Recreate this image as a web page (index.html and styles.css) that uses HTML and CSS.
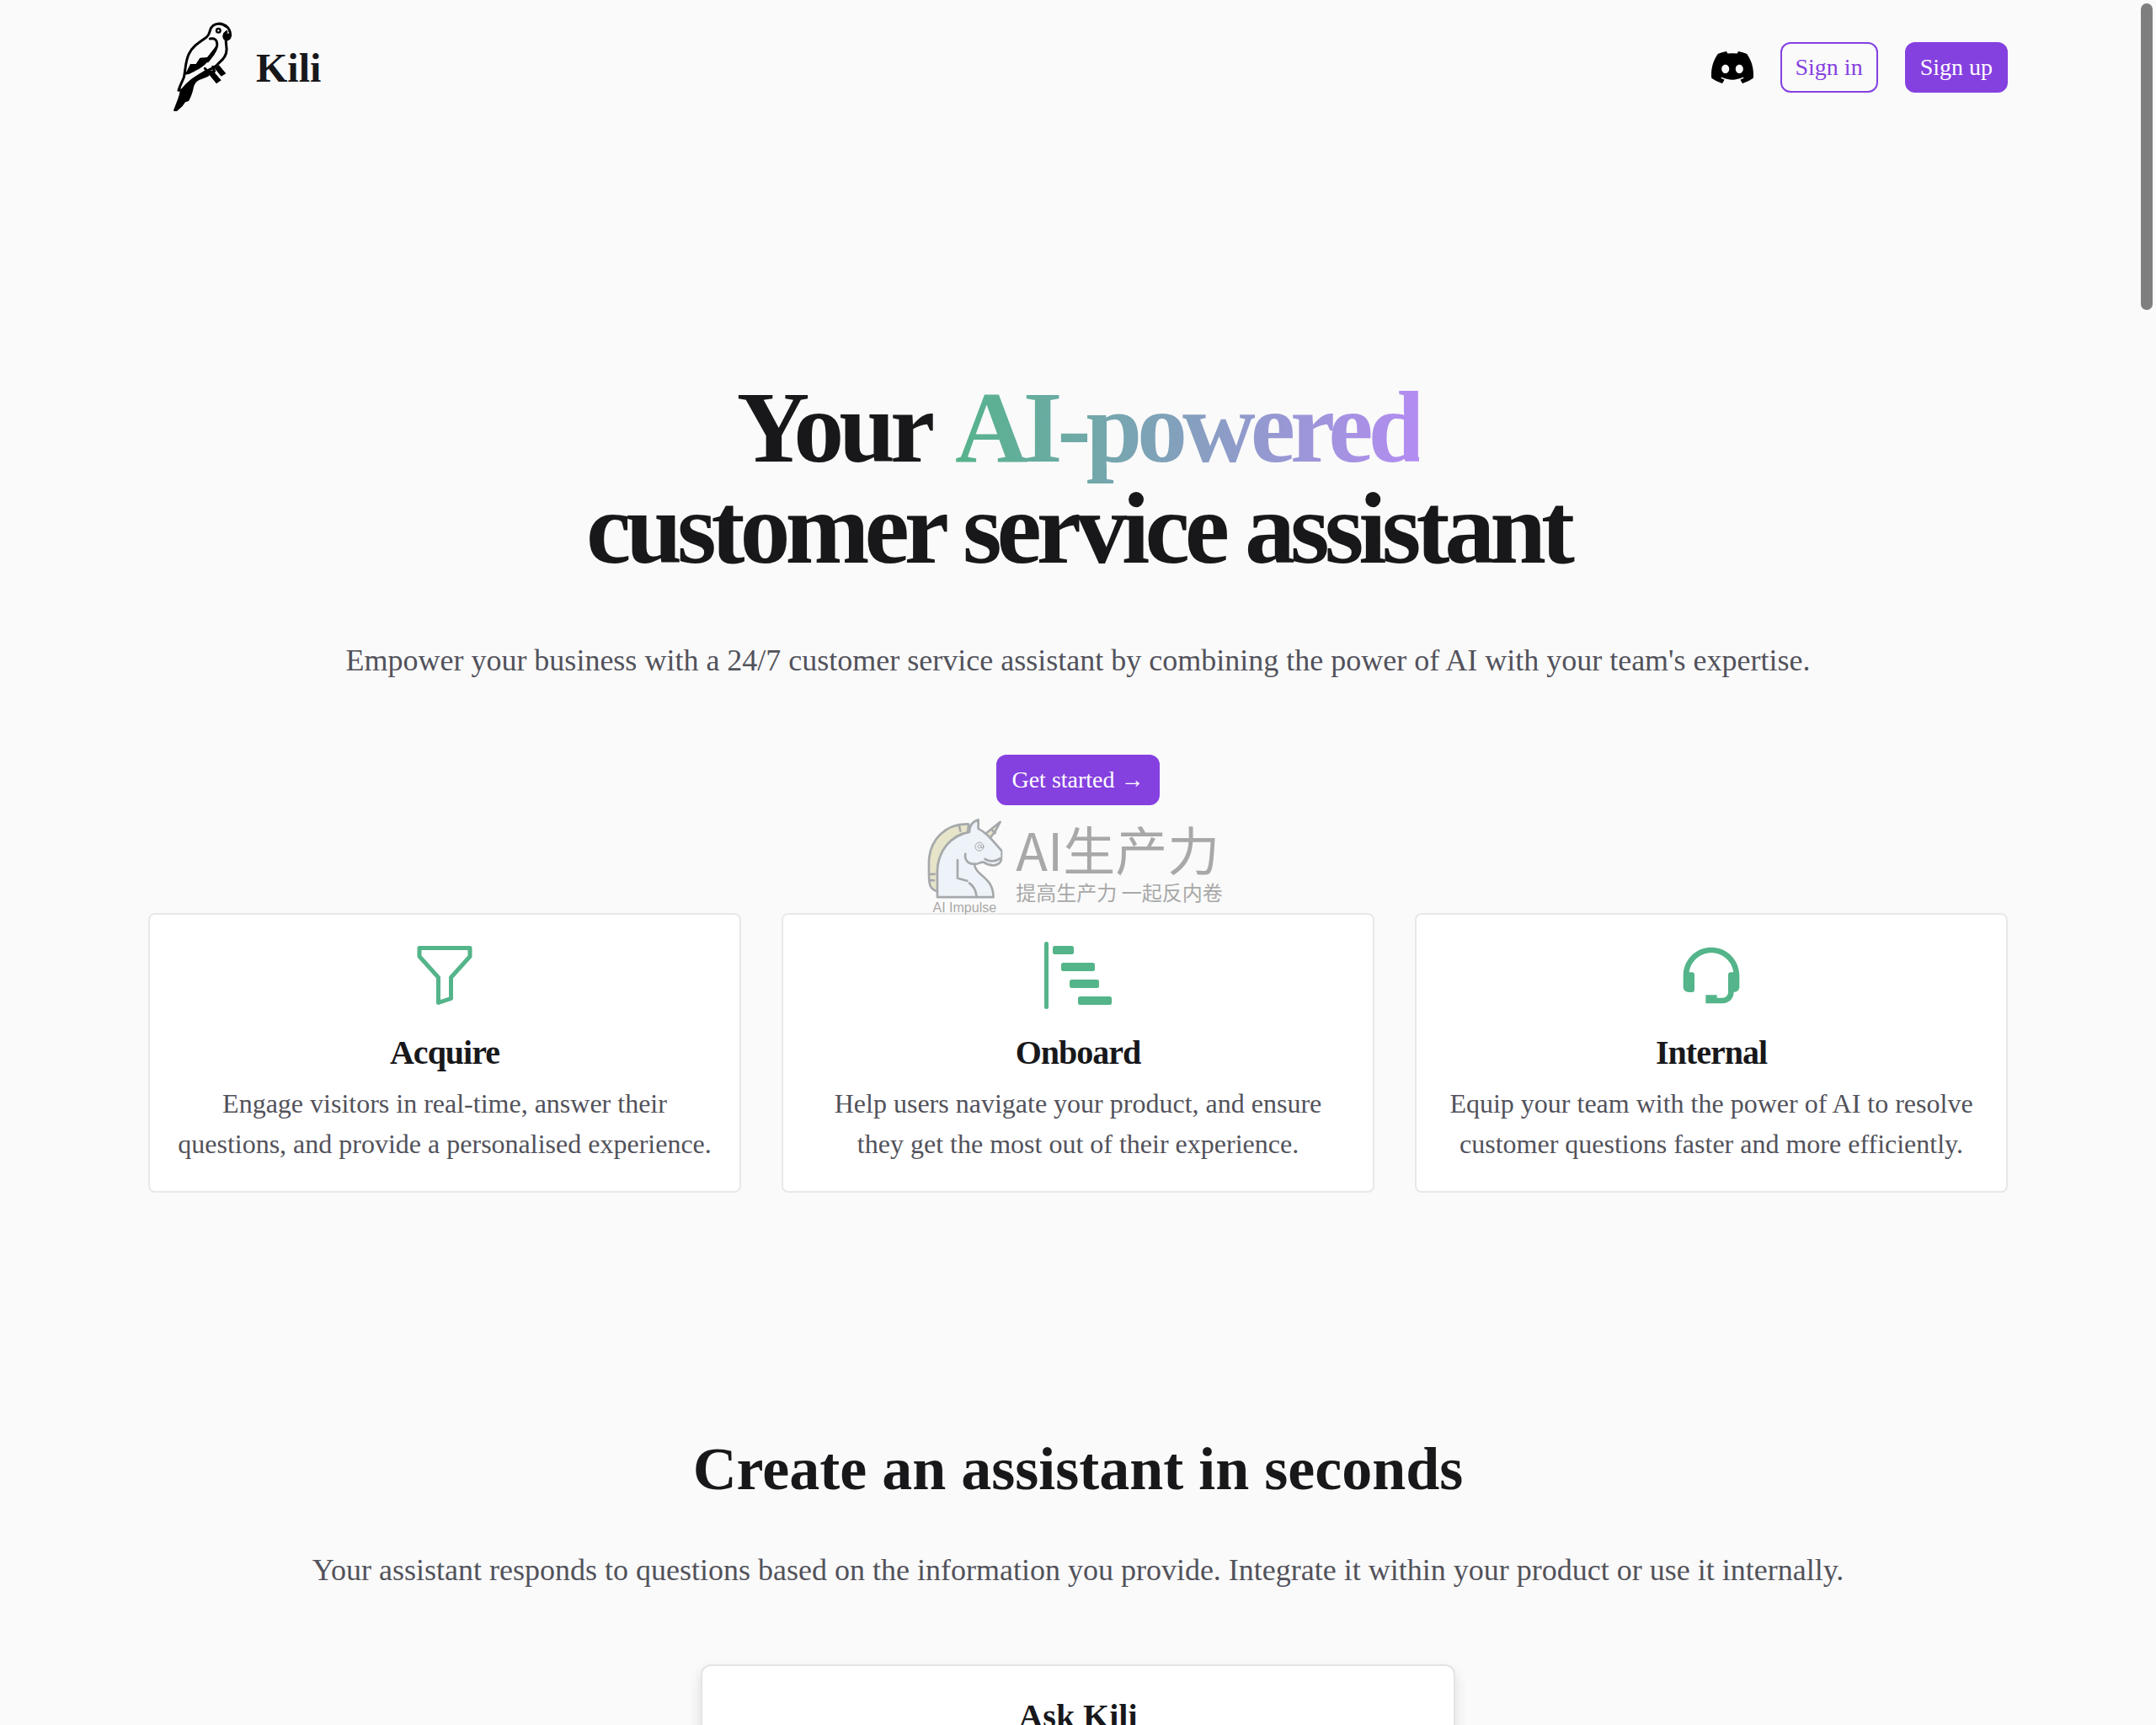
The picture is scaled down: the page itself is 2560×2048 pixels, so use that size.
FILE: index.html
```html
<!DOCTYPE html>
<html lang="en">
<head>
    <meta charset="UTF-8">
    <meta name="viewport" content="width=device-width, initial-scale=1.0">
    <title>Kili</title>
    <link rel="stylesheet" href="styles.css">
</head>
<body>
    <div class="container">
        <header class="header">
            <a class="brand" href="#">
                <svg class="brand-logo" viewBox="0 0 240 360" aria-hidden="true">
                    <g fill="none" stroke="#000" stroke-width="9" stroke-linecap="round" stroke-linejoin="round">
                        <path d="M187 58C172 44 146 45 134 63C127 76 130 87 117 97C94 113 66 130 54 158C42 184 43 212 37 240C31 254 23 270 18 286L32 284C50 257 76 242 105 224C130 210 152 204 160 190C180 174 191 156 189 136C188 122 186 114 187 104"/>
                        <path d="M130 102C148 98 157 108 155 126C151 150 134 166 122 182"/>
                        <path d="M187 56C198 65 203 76 203 90C201 104 190 108 184 103C176 95 180 83 189 77"/>
                        <path d="M40 226C62 224 86 208 94 192M112 208L124 222M140 202L146 218"/>
                    </g>
                    <path d="M156 122C150 156 120 192 96 206C82 216 60 220 44 224L60 192L80 192L94 170L120 168Z"/>
                    <path d="M24 284C60 250 92 228 124 210L138 218L124 236L100 246C80 252 76 262 72 274C68 296 62 310 54 324L42 328L32 342L10 362C3 366-2 360 2 352C10 330 20 310 24 284Z"/>
                    <path d="M122 224L139 214L170 250L153 262ZM146 207L162 196L187 226L170 236Z"/>
                    <path d="M180 80C188 84 196 80 203 86C203 106 193 112 185 107C175 101 174 90 180 80Z"/>
                    <circle cx="160" cy="73" r="7" fill="#fafafa" stroke="#000" stroke-width="7"/>
                </svg>
                <span class="brand-name">Kili</span>
            </a>
            <nav class="nav">
                <a class="nav-icon" href="#" aria-label="Discord">
                    <svg viewBox="0 0 16 16" fill="#000">
                        <path d="M13.545 2.907a13.227 13.227 0 0 0-3.257-1.011.05.05 0 0 0-.052.025c-.141.25-.297.577-.406.833a12.19 12.19 0 0 0-3.658 0 8.258 8.258 0 0 0-.412-.833.051.051 0 0 0-.052-.025c-1.125.194-2.22.534-3.257 1.011a.041.041 0 0 0-.021.018C.356 6.024-.213 9.047.066 12.032c.001.014.01.028.021.037a13.276 13.276 0 0 0 3.995 2.02.05.05 0 0 0 .056-.019c.308-.42.582-.863.818-1.329a.05.05 0 0 0-.01-.059.051.051 0 0 0-.018-.011 8.875 8.875 0 0 1-1.248-.595.05.05 0 0 1-.02-.066.051.051 0 0 1 .015-.019c.084-.063.168-.129.248-.195a.05.05 0 0 1 .051-.007c2.619 1.196 5.454 1.196 8.041 0a.052.052 0 0 1 .053.007c.08.066.164.132.248.195a.051.051 0 0 1-.004.085 8.254 8.254 0 0 1-1.249.594.05.05 0 0 0-.03.03.052.052 0 0 0 .003.041c.24.465.515.909.817 1.329a.05.05 0 0 0 .056.019 13.235 13.235 0 0 0 4.001-2.02.049.049 0 0 0 .021-.037c.334-3.451-.559-6.449-2.366-9.106a.034.034 0 0 0-.02-.019Zm-8.198 7.307c-.789 0-1.438-.724-1.438-1.612 0-.889.637-1.613 1.438-1.613.807 0 1.45.73 1.438 1.613 0 .888-.637 1.612-1.438 1.612Zm5.316 0c-.788 0-1.438-.724-1.438-1.612 0-.889.637-1.613 1.438-1.613.807 0 1.451.73 1.438 1.613 0 .888-.631 1.612-1.438 1.612Z"/>
                    </svg>
                </a>
                <a class="btn btn-outline" href="#">Sign in</a>
                <a class="btn" href="#">Sign up</a>
            </nav>
        </header>

        <main>
            <section class="hero">
                <h1>Your <span class="gradient">AI-powered</span><br>customer service assistant</h1>
                <p class="lead">Empower your business with a 24/7 customer service assistant by combining the power of AI with your team's expertise.</p>
                <a class="btn" href="#">Get started →</a>
                <div class="watermark">
                    <div class="watermark-logo">
                        <svg viewBox="0 0 270 290" fill="none" stroke="#a6a9ab" stroke-width="8" stroke-linecap="round" stroke-linejoin="round" aria-hidden="true">
                            <path fill="#e6e4c9" d="M40 262C10 254 8 236 8 196V156C10 76 70 18 150 22L146 52C90 60 42 116 38 190Z"/>
                            <path fill="#e6e4c9" d="M210 56L262 14L244 48L222 76Z"/>
                            <path fill="#edf3f8" d="M38 282V190C40 116 86 62 152 50C152 28 164 12 184 6V38C214 52 236 82 268 118V140C264 172 232 176 204 158C194 154 184 166 170 164C174 208 236 206 238 282Z"/>
                            <path d="M138 128C134 148 146 164 170 164M110 150V214C124 220 134 220 144 224M152 232C168 242 176 260 178 282M208 146C224 158 248 154 262 144M116 28L120 46M12 200H28M12 222H26M232 42L244 54"/>
                            <circle cx="188" cy="102" r="15" stroke-width="3"/>
                            <path stroke-width="3" d="M194 96V106Q202 108 202 98M194 102A6 6 0 1 1 193 98"/>
                        </svg>
                        <span>AI Impulse</span>
                    </div>
                    <div class="watermark-text" lang="zh">
                        <span class="watermark-title">AI生产力</span>
                        <span class="watermark-slogan">提高生产力 一起反内卷</span>
                    </div>
                </div>
            </section>

            <section class="features">
                <article class="card">
                    <svg class="card-icon" viewBox="0 0 16 16" aria-hidden="true">
                        <path d="M1.5 1.5A.5.5 0 0 1 2 1h12a.5.5 0 0 1 .5.5v2a.5.5 0 0 1-.128.334L10 8.692V13.5a.5.5 0 0 1-.342.474l-3 1A.5.5 0 0 1 6 14.5V8.692L1.628 3.834A.5.5 0 0 1 1.5 3.5v-2zm1 .5v1.308l4.372 4.858A.5.5 0 0 1 7 8.5v5.306l2-.666V8.5a.5.5 0 0 1 .128-.334L13.5 3.308V2h-11z"/>
                    </svg>
                    <h3>Acquire</h3>
                    <p>Engage visitors in real-time, answer their questions, and provide a personalised experience.</p>
                </article>
                <article class="card">
                    <svg class="card-icon" viewBox="0 0 16 16" aria-hidden="true">
                        <rect x="0" y="0" width="1" height="16" rx=".5"/>
                        <rect x="2" y="1" width="5" height="2" rx=".5"/>
                        <rect x="4" y="5" width="8" height="2" rx=".5"/>
                        <rect x="6" y="9" width="7" height="2" rx=".5"/>
                        <rect x="8" y="13" width="8" height="2" rx=".5"/>
                    </svg>
                    <h3>Onboard</h3>
                    <p>Help users navigate your product, and ensure they get the most out of their experience.</p>
                </article>
                <article class="card">
                    <svg class="card-icon" viewBox="0 0 24 24" aria-hidden="true">
                        <path d="M12 2C6.486 2 2 6.486 2 12v4.143C2 17.167 2.897 18 4 18h1a1 1 0 0 0 1-1v-5.143a1 1 0 0 0-1-1h-.908C4.648 6.987 7.978 4 12 4s7.352 2.987 7.908 6.857H19a1 1 0 0 0-1 1V18c0 1.103-.897 2-2 2h-2v-1h-4v3h6c2.206 0 4-1.794 4-4 1.103 0 2-.833 2-1.857V12c0-5.514-4.486-10-10-10z"/>
                    </svg>
                    <h3>Internal</h3>
                    <p>Equip your team with the power of AI to resolve customer questions faster and more efficiently.</p>
                </article>
            </section>

            <section class="create">
                <h2>Create an assistant in seconds</h2>
                <p class="lead">Your assistant responds to questions based on the information you provide. Integrate it within your product or use it internally.</p>
                <div class="chat">
                    <h3>Ask Kili</h3>
                </div>
            </section>
        </main>
    </div>
    <div class="scroll-thumb"></div>
</body>
</html>
```

FILE: styles.css
```css
* {
    box-sizing: border-box;
}
body {
    margin: 0;
    height: 100vh;
    overflow: hidden;
    background: #fafafa;
    color: #18181b;
    font-family: "Liberation Serif", "Times New Roman", serif;
}
h1, h2, h3, p {
    margin: 0;
}
a {
    color: inherit;
    text-decoration: none;
}
svg {
    display: block;
}
.container {
    max-width: 2304px;
    margin: 0 auto;
    padding: 0 48px;
}

/* header */
.header {
    display: flex;
    justify-content: space-between;
    align-items: center;
    height: 160px;
}
.brand {
    display: flex;
    align-items: center;
    gap: 18px;
    padding-left: 30px;
}
.brand-logo {
    width: 80px;
    height: 120px;
    margin-bottom: 16px;
}
.brand-name {
    font-size: 48px;
    font-weight: bold;
}
.nav {
    display: flex;
    align-items: center;
    gap: 32px;
}
.nav-icon svg {
    width: 50px;
    height: 50px;
}
.btn {
    display: inline-block;
    padding: 8px 16px;
    border: 2px solid #8540e0;
    border-radius: 12px;
    background: #8540e0;
    color: #fff;
    font-size: 28px;
    line-height: 40px;
}
.btn-outline {
    background: transparent;
    color: #8540e0;
}

/* hero */
.hero {
    position: relative;
    padding: 288px 0 128px;
    text-align: center;
}
h1 {
    font-size: 120px;
    line-height: 120px;
    letter-spacing: -0.05em;
}
.gradient {
    padding-left: 8px;
    background: linear-gradient(to right, #54b48a, #b48cf2);
    -webkit-background-clip: text;
    background-clip: text;
    color: transparent;
}
.lead {
    margin: 64px 0 80px;
    color: #52525b;
    font-size: 36px;
    line-height: 64px;
}
.watermark {
    position: absolute;
    left: 50%;
    bottom: -4px;
    display: flex;
    gap: 16px;
    padding-right: 8px;
    transform: translateX(-50%);
    color: #a8a8a8;
    white-space: nowrap;
}
.watermark-logo {
    font-family: "Liberation Sans", Arial, sans-serif;
    font-size: 16px;
    line-height: 20px;
    text-align: center;
}
.watermark-logo svg {
    width: 90px;
    height: 97px;
}
.watermark-text {
    display: flex;
    flex-direction: column;
    text-align: left;
    font-family: "Noto Sans CJK SC", sans-serif;
}
.watermark-title {
    font-size: 62px;
    line-height: 72px;
}
.watermark-slogan {
    font-size: 24px;
    line-height: 32px;
}

/* feature cards */
.features {
    display: grid;
    grid-template-columns: repeat(3, 1fr);
    gap: 48px;
}
.card {
    padding: 32px;
    border: 2px solid #e8e8ea;
    border-radius: 8px;
    background: #fff;
    text-align: center;
}
.card-icon {
    width: 80px;
    height: 80px;
    margin: 0 auto 24px;
    fill: #54b48a;
}
h3 {
    font-size: 40px;
    line-height: 56px;
}
.card h3 {
    margin-bottom: 8px;
    letter-spacing: -0.025em;
}
.card p {
    color: #52525b;
    font-size: 32px;
    line-height: 48px;
}

/* create section */
.create {
    padding-top: 292px;
    text-align: center;
}
h2 {
    font-size: 72px;
    line-height: 72px;
}
.create .lead {
    margin-top: 52px;
}
.chat {
    max-width: 896px;
    margin: 0 auto;
    padding: 32px;
    border: 2px solid #e4e4e7;
    border-radius: 12px;
    background: #fff;
    box-shadow: 0 8px 16px rgba(0, 0, 0, 0.12);
}

.scroll-thumb {
    position: fixed;
    top: 4px;
    right: 4px;
    width: 14px;
    height: 364px;
    border-radius: 7px;
    background: #7f7f7f;
}
```
